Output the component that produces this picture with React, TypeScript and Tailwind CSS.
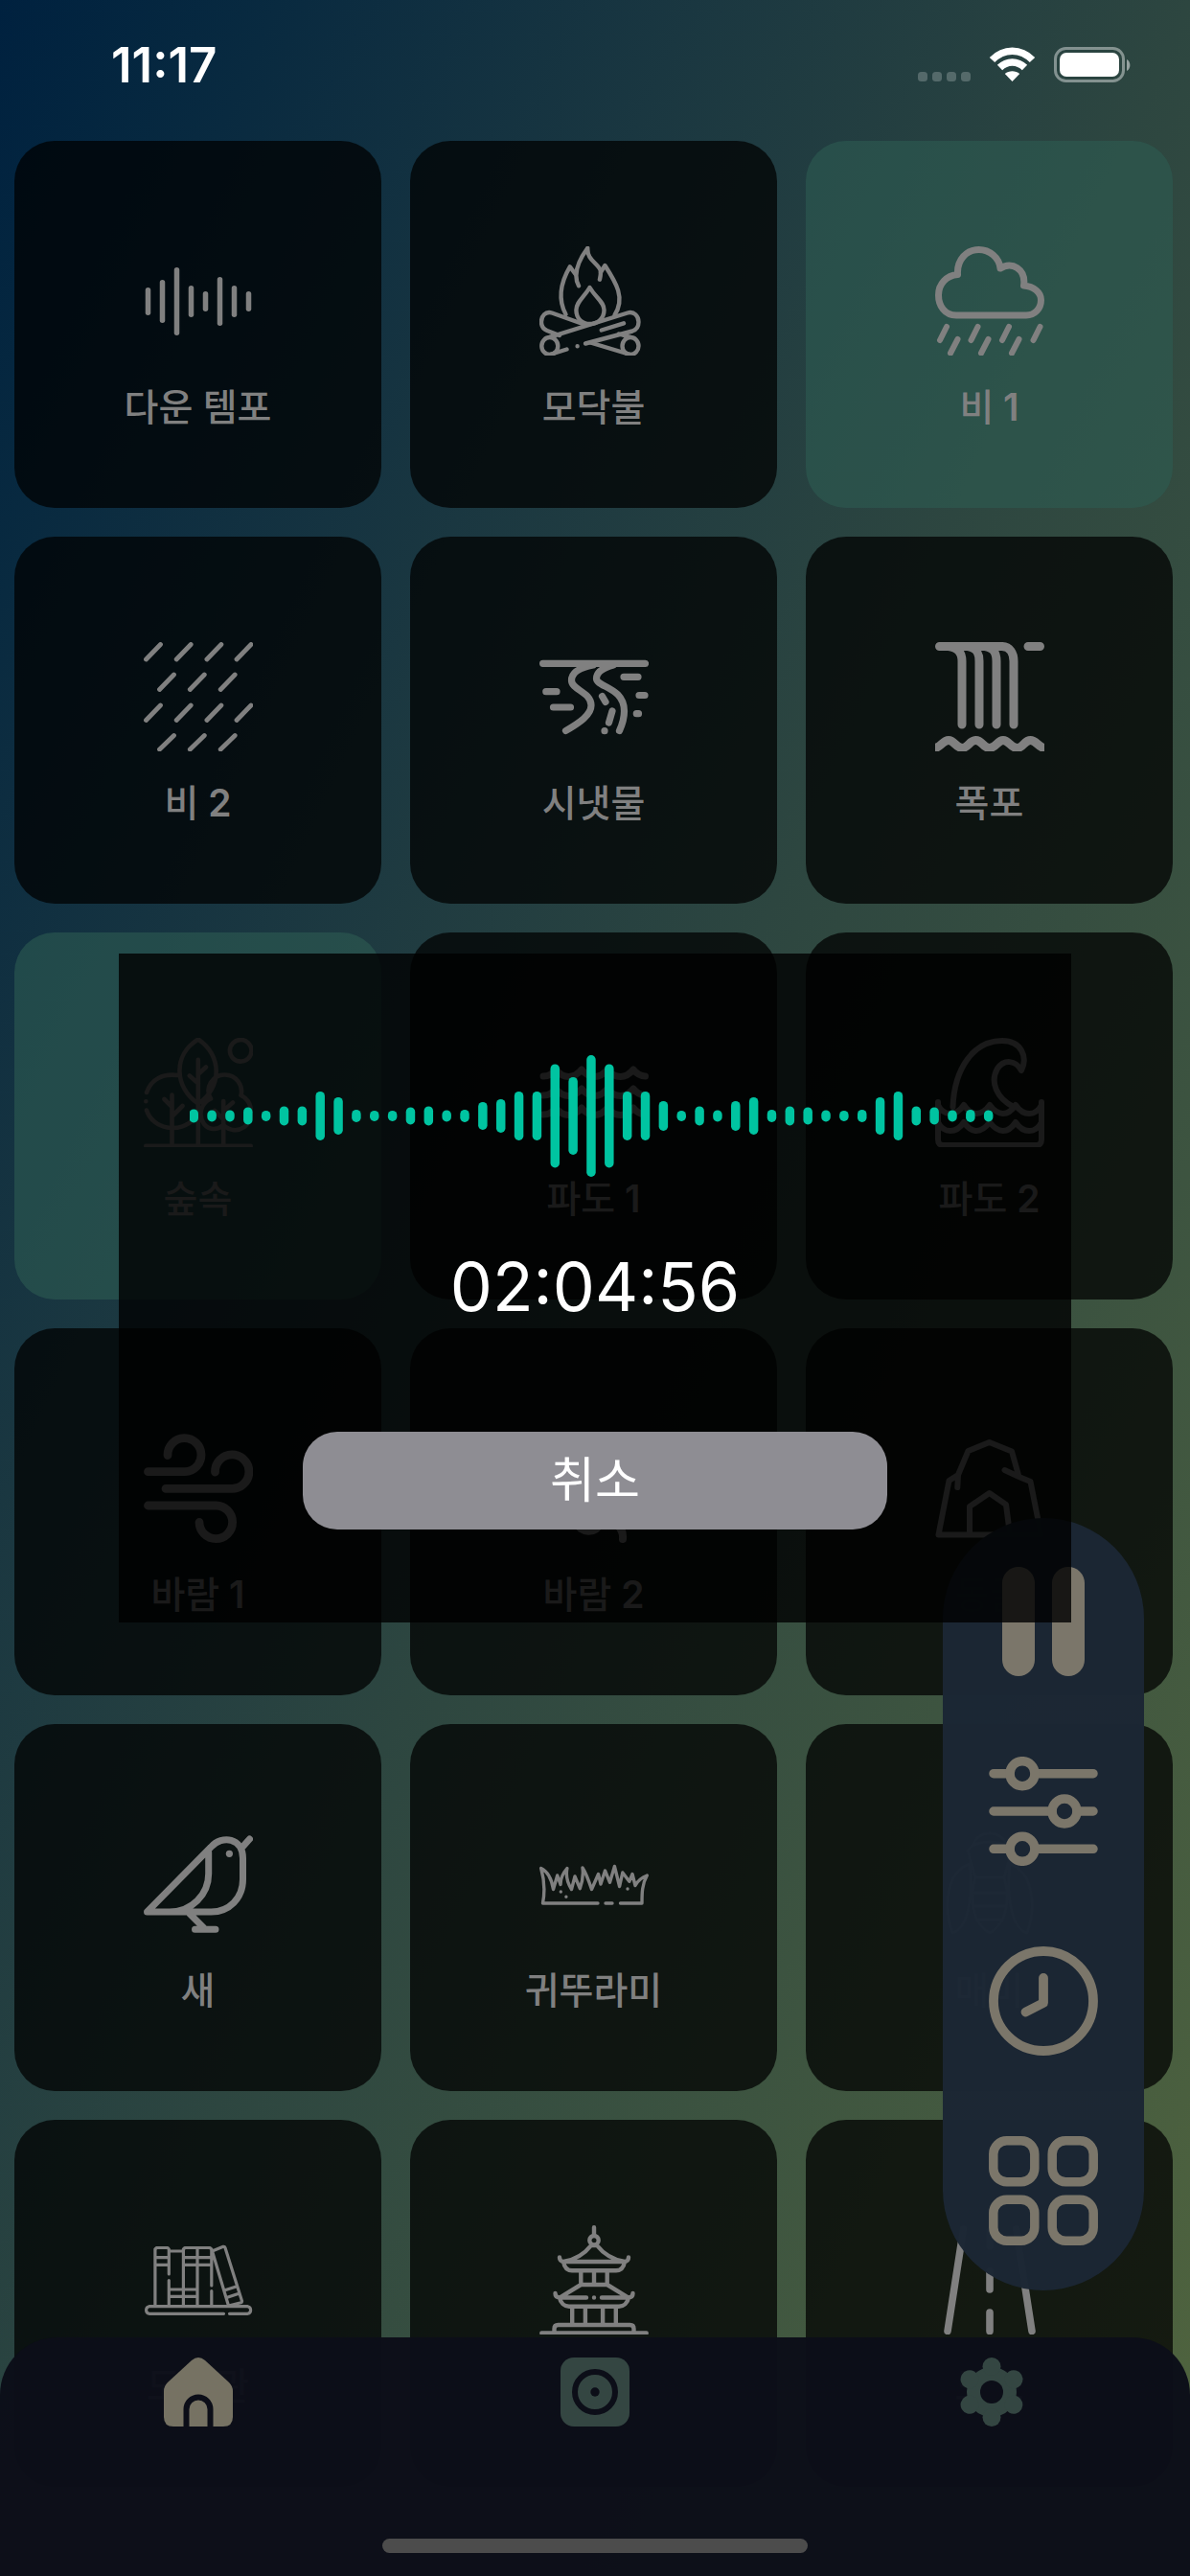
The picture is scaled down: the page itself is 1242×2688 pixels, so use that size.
import type { ReactNode } from "react";

const line = {
  fill: "none",
  stroke: "currentColor",
  strokeLinecap: "round" as const,
  strokeLinejoin: "round" as const,
};

function Tempo() {
  const bars = [
    [4.5, 43, 72],
    [19.5, 35, 80],
    [34.5, 22, 93],
    [49.5, 41, 74],
    [64.5, 47, 68],
    [79.5, 32, 83],
    [94.5, 41, 74],
    [109.5, 47, 68],
  ];
  return (
    <g {...line} strokeWidth="5.5">
      {bars.map(([x, a, b]) => (
        <path key={x} d={`M${x} ${a + 2.75}V${b - 2.75}`} />
      ))}
    </g>
  );
}

function Campfire() {
  return (
    <g {...line} strokeWidth="4.4">
      <path d="M27.5 71C19 55 22 38 31.8 21.3L37.5 29" />
      <path d="M41 41.3C36 32 37 20 50.3 1.8C49.500 14 60 17 63.600 24.700C64.500 29 63.500 32 62.900 34.700" />
      <path d="M64 27L68.400 20C80 38 90 54 78.400 72" />
      <path d="M52.500 43C46 54 38.400 58 38.400 66.500C38.400 76 45 81 52.500 81S67.500 76 67.500 66.500C67.500 58 59 54 52.500 43Z" />
      <path d="M48 82L13 69.500C6 67.500 2 73 2 79C2 84 4.500 86.500 8 88L21 93" />
      <path d="M10.500 94.800L92 69.500C99 67.500 103.500 73 103.500 79C103.500 84 101.500 87 97 88.500L48 101.500" />
      <path d="M82.800 91.500L95 94.800" />
      <path d="M95 113L53.200 100.500" />
      <ellipse cx="95" cy="104" rx="8.500" ry="9" />
      <ellipse cx="10.800" cy="104" rx="8.500" ry="9" />
      <path d="M10.800 113L28.500 107.500M39.600 104.300h.01M64.800 87.500L88 80.300" />
    </g>
  );
}

function Rain() {
  return (
    <g {...line}>
      <path
        strokeWidth="7"
        d="M22 72C10 72 3.500 62 3.500 51C3.500 39 12 30.500 23.500 29.500C22.500 14 33 3.500 45.500 3.500C57 3.500 67 12 68 23C80 15 95 24 92.500 41C103 42 110.500 48 110.500 56C110.500 65 104 72 95 72Z"
      />
      <path
        strokeWidth="6"
        d="M12 84L5 98M44.500 84L37.500 98M77 84L70 98M109.500 84L102.500 98M23.500 97L16 111.500M55.500 97L48 111.500M87.500 97L80 111.500"
      />
    </g>
  );
}

function Drizzle() {
  return (
    <path
      {...line}
      strokeWidth="4.800"
      d="M17.500 2.500L2.500 18M49.200 2.500L34.200 18M80.900 2.500L65.900 18M112 2.500L97 18M31.500 34L16.500 49.500M63.300 34L48.300 49.500M95.200 34L80.200 49.500M17.500 66L2.500 81.500M49.200 66L34.200 81.500M80.900 66L65.900 81.500M112 66L97 81.500M31.500 97.500L16.500 112M63.300 97.500L48.300 112M95.200 97.500L80.200 112"
    />
  );
}

function Stream() {
  return (
    <path
      {...line}
      strokeWidth="7.200"
      d="M3.600 22.300H110.500M56 24C40 27 33.500 33 33.500 40C33.500 50 54 52 54 66C54 76 42 84 27.500 92.500M77 24C66 27 59.500 32 59.500 38C59.500 47 88.500 47 88.500 72C88.500 80 86 87 83.500 92.500M88 36.300H103M104 55.500H110M101.300 74.700H103.500M6.800 51.700H18M14.500 68H32.500M65.500 56.500L69 62.500M76 72L72.500 84M68 92.700h.01"
    />
  );
}

function Waterfall() {
  return (
    <g {...line} strokeWidth="9">
      <path d="M4.500 4.500H70C78 5 82 11 82 20V86M14 4.500C24 6 28 11 28 20V86M34 4.500C43 6 46 11 46 20V86M52 4.500C61 6 64 11 64 20V86M97 4.500H109.500" />
      <path
        strokeLinecap="butt"
        d="M-2 111C5 111 8 102.500 14 102.500S22 110.500 28.200 110.500S36 102.500 42.500 102.500S50 110.500 56.700 110.500S65 102.500 71 102.500S79 110.500 85.500 110.500S93 102.500 99.500 102.500S108 111 116 111"
      />
    </g>
  );
}

function Forest() {
  return (
    <path
      {...line}
      strokeWidth="4.600"
      d="M2.300 112.700H111.700M56.800 1.500C30 18 32 52 56.800 68.700C82 52 82 18 56.800 1.500ZM56.800 22.700V112M47.800 39.500L56.800 47.500M65 30.500L56.800 38M112.500 13.300A11.300 11.300 0 1 1 89.900 13.300A11.300 11.300 0 1 1 112.500 13.300M3 57C8 43 20 37 35.500 39M3 75.500C9 95 38 101 53 84M2.300 66.300h.01M29.500 59.500V112M21.500 64L29.500 72M40.500 71L29.500 82M70 63.500C63 52 72 38.500 84.500 38.500C97 38.500 104 50 101.500 60C114 66 116 84 105 93C98 98 90 97 83 91C76 97 68 96 63 90C56 80 60 68 70 63.500M83.200 66V112M93 67.500L83.200 76M74 76L83.200 85"
    />
  );
}

function Sea() {
  return (
    <g {...line} strokeWidth="7">
      {[0, 20, 40].map((dy) => (
        <path
          key={dy}
          transform={`translate(0 ${dy})`}
          d="M4 40C10 40 13 38 17 33C25 43 36 43 44 33C52 43 63 43 71 33C79 43 90 43 98 33C102 38 105 40 110.500 40"
        />
      ))}
    </g>
  );
}

function BigWave() {
  return (
    <path
      {...line}
      strokeWidth="6"
      d="M18.500 72C20 32 40 3 70 3C90 3 97 20 90 34C84 23 72 22 65 32C57 46 64 63 82 72M3 67V106C3 110 5 112 8 112H106C109 112 111 110 111 106V67M3 70C9 82 22 82 30 70C38 82 48 82 57 70C66 82 76 82 84 70C92 82 105 82 111 70M3 88C9 100 22 100 30 88C38 100 48 100 57 88C66 100 76 100 84 88C92 100 105 100 111 88"
    />
  );
}

function Wind() {
  return (
    <path
      {...line}
      strokeWidth="8.800"
      d="M4.500 39.700H43A17.500 17.500 0 1 0 25 22.500M23 57.300H92A17.700 17.700 0 1 0 74.500 40M4.500 75H75.500A17.300 17.300 0 1 1 58 92.500"
    />
  );
}

function Gust() {
  return (
    <path
      {...line}
      strokeWidth="8"
      d="M8 20H104M16 44H98M24 68H90M38 92C42 104 60 106 64 92M66 90C80 92 88 98 87 110"
    />
  );
}

function Cave() {
  return (
    <path
      {...line}
      strokeWidth="6"
      d="M3.500 105.500L14.500 49L24 43L34.500 18L56.600 9L80 18.500L87.500 45L99.500 50L110.500 105.500ZM24 43L23.300 56M72.500 38L87.500 45M36 105V76L56.600 62L74 74L78 105"
    />
  );
}

function Bird() {
  return (
    <g>
      <path
        {...line}
        strokeWidth="7"
        d="M3.500 86L70 18.500C82 5 103.500 9 103.500 30V52C103.500 72 89 86 70.500 86ZM67.700 24V46C67.700 68 50 86 27 86M110.500 10L102.500 19M48 88L62.500 102.500M53.500 104.300H75"
      />
      <circle cx="89.400" cy="25.300" r="3.600" fill="currentColor" />
    </g>
  );
}

function Grass() {
  return (
    <path
      {...line}
      strokeWidth="3.400"
      d="M61 77H3.500C6 64 5 52 1.700 40.500C9 44 13 53 14.500 62.500L18.700 48L22 57.500C22 50 25 45 28.900 40.500C27 50 30 57 33.500 62.500L37 49L42.300 61.700C45 54 46 47 45 40C49 46 52 55 54.500 62.500L61.500 46.500L64 57L68.500 43L73.500 55.300L78.400 38.500L83.600 59.500L86.800 45L93.800 54.300L97 46.500L100 58.500C103 53 107 50 112.300 48C107 57 107 67 107 77H84.500M69 77H76M22.300 65h.01M27.900 70.300h.01M92 62h.01"
    />
  );
}

function Bee() {
  return (
    <path
      {...line}
      strokeWidth="3"
      d="M40 16C44 0 70 0 74 16M34 22C40 10 74 10 80 22M34 22L42 50H72L80 22M42 50C36 70 38 98 57 108C76 98 78 70 72 50M40 66H74M40 80H74M44 94H70M36 36C12 44 8 80 18 108C34 104 40 70 36 36M78 36C102 44 106 80 96 108C80 104 74 70 78 36"
    />
  );
}

function Books() {
  return (
    <path
      {...line}
      strokeWidth="3.200"
      d="M83.500 92.300H5.600A3.900 3.900 0 0 1 5.600 84.700H108.600A3.900 3.900 0 0 1 108.600 92.300H89.500M11.900 84V25L13.500 23.500H25L26.300 25V51M26.300 57.500V84M26.300 27H41.400M41.400 84V25L43 23.500H69L70.800 25V63M56 24V84M70.800 68.500V84M12 33.700H26M12 41.300H26M42 33.700H70M42 41.300H70M27 67H56M27 74.300H56M71.500 27L83 22.300Q84.500 22 85 23.500L102.500 79Q102.700 80.300 101.500 80.700L88.500 84L71.500 27M84 68L96.500 64M86.500 75.500L98.500 71.500"
    />
  );
}

function Pagoda() {
  return (
    <path
      {...line}
      strokeWidth="4.400"
      d="M57 2.300V10M61.700 15.700A4.700 4.700 0 1 1 52.300 15.700A4.700 4.700 0 1 1 61.700 15.700M54 21C47 30 37 36 25 38H89C77 36 67 30 60 21ZM21 33.500C21 36 22.500 38 25 38C26 44 29 47.300 34 47.300H80C85 47.300 88 44 89 38C91.500 38 93 36 93 33.500M43.300 47.500V62M57 47.500V62M70.700 47.500V62M21.500 75.300L43.300 62H70.700L92.500 75.300M16.500 71C16.500 74 18.500 75.300 21 75.500C22 81 26 84.700 31 84.700H83C88 84.700 92 81 93 75.500C95.500 75.300 97.500 74 97.500 71M22 75.500H49M57 75.500h.01M65 75.500H92M34.200 85V103M47.900 85V103M66.100 85V103M79.800 85V103M15.500 111V108Q15.500 104 19.500 104H94.500Q98.500 104 98.500 108V111M2.300 112.500H111.700"
    />
  );
}

function Road() {
  return (
    <path
      {...line}
      strokeWidth="7.600"
      d="M29.500 4L13 110.500M84.500 4L101 110.500M57 6V22M57 48V67M57 91V110.500"
    />
  );
}

type Sound = { name: string; num?: number; icon: ReactNode; on?: boolean };

const sounds: Sound[] = [
  { name: "다운 템포", icon: <Tempo /> },
  { name: "모닥불", icon: <Campfire /> },
  { name: "비", num: 1, icon: <Rain />, on: true },
  { name: "비", num: 2, icon: <Drizzle /> },
  { name: "시냇물", icon: <Stream /> },
  { name: "폭포", icon: <Waterfall /> },
  { name: "숲속", icon: <Forest />, on: true },
  { name: "파도", num: 1, icon: <Sea /> },
  { name: "파도", num: 2, icon: <BigWave /> },
  { name: "바람", num: 1, icon: <Wind /> },
  { name: "바람", num: 2, icon: <Gust /> },
  { name: "동굴", icon: <Cave /> },
  { name: "새", icon: <Bird /> },
  { name: "귀뚜라미", icon: <Grass /> },
  { name: "매미", icon: <Bee /> },
  { name: "도서관", icon: <Books /> },
  { name: "절", icon: <Pagoda /> },
  { name: "도로", icon: <Road /> },
];

function SoundCard({ name, num, icon, on }: Sound) {
  return (
    <button
      type="button"
      aria-pressed={!!on}
      className={
        "flex aspect-square flex-col items-center rounded-[42px] pt-[110px] text-[#808080] " +
        (on ? "bg-[#2d5b52]/60" : "bg-black/73")
      }
    >
      <svg viewBox="0 0 114 114" className="size-[114px]" aria-hidden="true">
        {icon}
      </svg>
      <span className="mt-[26px] text-[39px] leading-[56px] font-medium">
        {name}
        {num && <span className="font-semibold"> {num}</span>}
      </span>
    </button>
  );
}

function StatusBar() {
  return (
    <header className="flex h-[147px] items-start justify-between pt-[44px] pr-[62px] pl-[116px] text-white">
      <time className="text-[51px] leading-[48px] font-semibold">11:17</time>
      <svg viewBox="0 0 222 40" className="mt-[4px] h-[40px] w-[222px]" aria-hidden="true">
        <g fill="#fff" fillOpacity="0.22">
          <rect x="0" y="27" width="10" height="10" rx="3.500" />
          <rect x="15" y="27" width="10" height="10" rx="3.500" />
          <rect x="30" y="27" width="10" height="10" rx="3.500" />
          <rect x="45" y="27" width="10" height="10" rx="3.500" />
        </g>
        <g fill="none" stroke="#fff" strokeWidth="7.500">
          <path d="M77.500 14.500C89.500 2 107.500 2 119.500 14.500" />
          <path d="M85.500 22.500C93 15 104 15 111.500 22.500" />
        </g>
        <path d="M98.500 37L90.800 29C95 25.200 102 25.200 106.200 29Z" fill="#fff" />
        <rect x="143.500" y="2.500" width="71" height="34" rx="11" fill="none" stroke="#fff" strokeOpacity="0.42" strokeWidth="3" />
        <rect x="148" y="7" width="62" height="25" rx="7" fill="#fff" />
        <path d="M218 14C222.500 16 222.500 24 218 26Z" fill="#fff" fillOpacity="0.5" />
      </svg>
    </header>
  );
}

function Toolbar() {
  const tools = [
    {
      label: "일시정지",
      icon: (
        <g fill="currentColor">
          <rect x="14" width="34" height="114" rx="17" />
          <rect x="66" width="34" height="114" rx="17" />
        </g>
      ),
    },
    {
      label: "볼륨 조절",
      icon: (
        <g {...line} strokeWidth="9.500">
          <path d="M5 17.700H22M48 17.700H109M5 57H66M92 57H109M5 96.300H22M48 96.300H109" />
          <circle cx="35" cy="17.700" r="13" />
          <circle cx="79" cy="57" r="13" />
          <circle cx="35" cy="96.300" r="13" />
        </g>
      ),
    },
    {
      label: "타이머",
      icon: (
        <g {...line} strokeWidth="9.800">
          <circle cx="57" cy="57" r="52" />
          <path d="M57 33V59L38.500 68.500" />
        </g>
      ),
    },
    {
      label: "전체 보기",
      icon: (
        <g {...line} strokeWidth="9.500">
          <rect x="4.800" y="4.800" width="43" height="43" rx="14" />
          <rect x="66.200" y="4.800" width="43" height="43" rx="14" />
          <rect x="4.800" y="66.200" width="43" height="43" rx="14" />
          <rect x="66.200" y="66.200" width="43" height="43" rx="14" />
        </g>
      ),
    },
  ];
  return (
    <nav
      aria-label="재생 도구"
      className="absolute right-12 bottom-[298px] flex w-[210px] flex-col items-center gap-[84px] rounded-full bg-[#1b2634]/99 pt-[51px] pb-[47px] text-[#7b766a]"
    >
      {tools.map((t) => (
        <button key={t.label} type="button" aria-label={t.label} className="size-[114px]">
          <svg viewBox="0 0 114 114" className="size-full" aria-hidden="true">
            {t.icon}
          </svg>
        </button>
      ))}
    </nav>
  );
}

function TabBar() {
  return (
    <nav
      aria-label="메뉴"
      className="absolute inset-x-0 bottom-0 flex h-[249px] flex-col justify-between rounded-t-[60px] bg-[#0c0e18]/98 pt-[21px] pb-6"
    >
      <div className="grid grid-cols-3 justify-items-center text-[#344642]">
        <a href="#home" aria-label="홈" aria-current="page" className="text-[#767263]">
          <svg viewBox="0 0 72 72" className="size-[72px]" aria-hidden="true">
            <path
              fill="currentColor"
              d="M29 3Q36 -3 43 3L68 26Q72 30 72 35V62Q72 72 62 72H10Q0 72 0 62V35Q0 30 4 26Z"
            />
            <path d="M23.500 73V54A12.500 12.500 0 0 1 48.500 54V73" fill="none" stroke="#0c0e18" strokeWidth="6" />
          </svg>
        </a>
        <a href="#mix" aria-label="믹스">
          <svg viewBox="0 0 72 72" className="size-[72px]" aria-hidden="true">
            <rect width="72" height="72" rx="14" fill="currentColor" />
            <circle cx="36" cy="36" r="21" fill="none" stroke="#0c0e18" strokeWidth="6" />
            <circle cx="36" cy="36" r="4.700" fill="#0c0e18" />
          </svg>
        </a>
        <a href="#settings" aria-label="설정">
          <svg viewBox="0 0 72 72" className="size-[72px]" aria-hidden="true">
            <g fill="currentColor">
              <circle cx="36" cy="36" r="26" />
              {[0, 60, 120, 180, 240, 300].map((a) => (
                <circle key={a} cx="36" cy="9.500" r="9.500" transform={`rotate(${a} 36 36)`} />
              ))}
            </g>
            <circle cx="36" cy="36" r="12" fill="#0c0e18" />
          </svg>
        </a>
      </div>
      <div className="mx-auto h-[15px] w-[444px] rounded-full bg-[#4c4c4c]" />
    </nav>
  );
}

const levels = [
  14, 12, 12, 18, 11, 20, 20, 51, 39, 13, 11, 11, 18, 20, 12, 13, 29, 35, 51, 51, 108, 81, 127, 108,
  51, 51, 31, 11, 20, 12, 31, 39, 13, 20, 18, 12, 11, 13, 39, 51, 20, 18, 12, 13, 12,
];

function TimerDialog() {
  return (
    <div className="absolute inset-0 flex items-center justify-center">
      <div
        role="dialog"
        aria-label="타이머"
        className="flex w-4/5 flex-col items-center bg-black/80 px-[74px] pt-[105px] pb-[97px] text-white"
      >
        <svg viewBox="0 0 846 128" className="w-full text-[#00c4a1]" aria-hidden="true">
          {levels.map((h, i) => (
            <rect
              key={i}
              x={i * 18.86 - 0.5}
              y={64.5 - h / 2}
              width="9.500"
              height={h}
              rx="4.700"
              fill="currentColor"
            />
          ))}
        </svg>
        <p className="mt-[75px] text-[70px] leading-[80px]" role="timer">
          02:04:56
        </p>
        <button
          type="button"
          className="mt-[111px] h-[102px] w-[610px] rounded-[36px] bg-[#8e8d93] text-[51px] leading-[72px]"
        >
          취소
        </button>
      </div>
    </div>
  );
}

export default function App() {
  return (
    <div className="relative h-screen overflow-hidden bg-linear-to-br from-[#00213f] via-[#2d4640] to-[#51653e] font-['Inter','Noto_Sans_CJK_KR',sans-serif]">
      <StatusBar />
      <main className="grid grid-cols-3 gap-[30px] pr-[18px] pl-[15px]">
        {sounds.map((s) => (
          <SoundCard key={s.num ? `${s.name} ${s.num}` : s.name} {...s} />
        ))}
      </main>
      <Toolbar />
      <TabBar />
      <TimerDialog />
    </div>
  );
}
